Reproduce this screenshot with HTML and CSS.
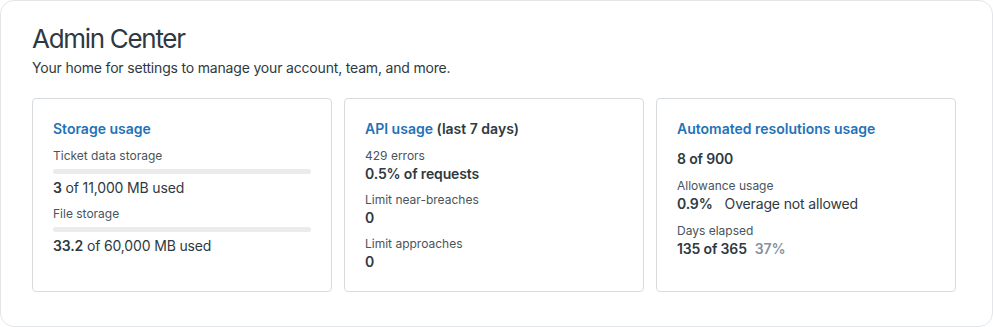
FILE: index.html
```html
<!DOCTYPE html>
<html lang="en">
<head>
<meta charset="utf-8">
<title>Admin Center</title>
<link rel="stylesheet" href="styles.css">
</head>
<body>
<main class="panel">
  <h1 class="title">Admin Center</h1>
  <p class="subtitle">Your home for settings to manage your account, team, and more.</p>
  <section class="cards">
    <article class="card">
      <h2 class="card-title"><a class="link">Storage usage</a></h2>
      <div class="group first">
        <div class="label">Ticket data storage</div>
        <div class="bar"></div>
        <div class="value"><b>3</b> of 11,000 MB used</div>
      </div>
      <div class="group">
        <div class="label">File storage</div>
        <div class="bar"></div>
        <div class="value"><b>33.2</b> of 60,000 MB used</div>
      </div>
    </article>
    <article class="card">
      <h2 class="card-title"><a class="link">API usage</a> (last 7 days)</h2>
      <div class="group first">
        <div class="label">429 errors</div>
        <div class="value strong">0.5% of requests</div>
      </div>
      <div class="group">
        <div class="label">Limit near-breaches</div>
        <div class="value strong">0</div>
      </div>
      <div class="group">
        <div class="label">Limit approaches</div>
        <div class="value strong">0</div>
      </div>
    </article>
    <article class="card card-auto">
      <h2 class="card-title"><a class="link">Automated resolutions usage</a></h2>
      <div class="group first">
        <div class="value strong">8 of 900</div>
      </div>
      <div class="group">
        <div class="label">Allowance usage</div>
        <div class="value"><b>0.9%</b><span class="note">Overage not allowed</span></div>
      </div>
      <div class="group">
        <div class="label">Days elapsed</div>
        <div class="value"><b>135 of 365</b><span class="muted">37%</span></div>
      </div>
    </article>
  </section>
</main>
</body>
</html>
```

FILE: styles.css
```css
* { box-sizing: border-box; }
html, body { margin: 0; padding: 0; background: #fff; }
body {
  font-family: Inter, "Liberation Sans", sans-serif;
  color: #2f3941;
}
.panel {
  width: 993px;
  height: 327px;
  border: 1px solid #e3e5e8;
  border-radius: 14px;
  padding: 22px 36px 0 31px;
}
.title {
  margin: 0;
  font-size: 26px;
  line-height: 32px;
  font-weight: 400;
  letter-spacing: -1.3px;
}
.subtitle {
  margin: 3px 0 0;
  font-size: 14px;
  line-height: 20px;
  letter-spacing: -0.18px;
}
.cards {
  margin-top: 20px;
  display: grid;
  grid-template-columns: repeat(3, 300px);
  column-gap: 12px;
}
.card {
  border: 1px solid #d8dcde;
  border-radius: 4px;
  padding: 20px 20px 19px;
}
.card-title {
  margin: 0;
  font-size: 14px;
  line-height: 20px;
  font-weight: 600;
}
.link { color: #1f73b7; }
.group { margin-top: 8px; }
.group.first { margin-top: 9px; }
.card-auto .group { margin-top: 9px; }
.card-auto .group.first { margin-top: 10px; }
.label {
  font-size: 12px;
  line-height: 16px;
  color: #49545c;
}
.value {
  font-size: 14px;
  line-height: 20px;
  letter-spacing: -0.15px;
}
.value b, .strong { font-weight: 600; }
.bar {
  margin: 5px 0 4px;
  height: 5px;
  border-radius: 3px;
  background: #e9ebed;
}
.note { margin-left: 12px; }
.muted { margin-left: 8px; color: #87929d; font-weight: 600; }
```
